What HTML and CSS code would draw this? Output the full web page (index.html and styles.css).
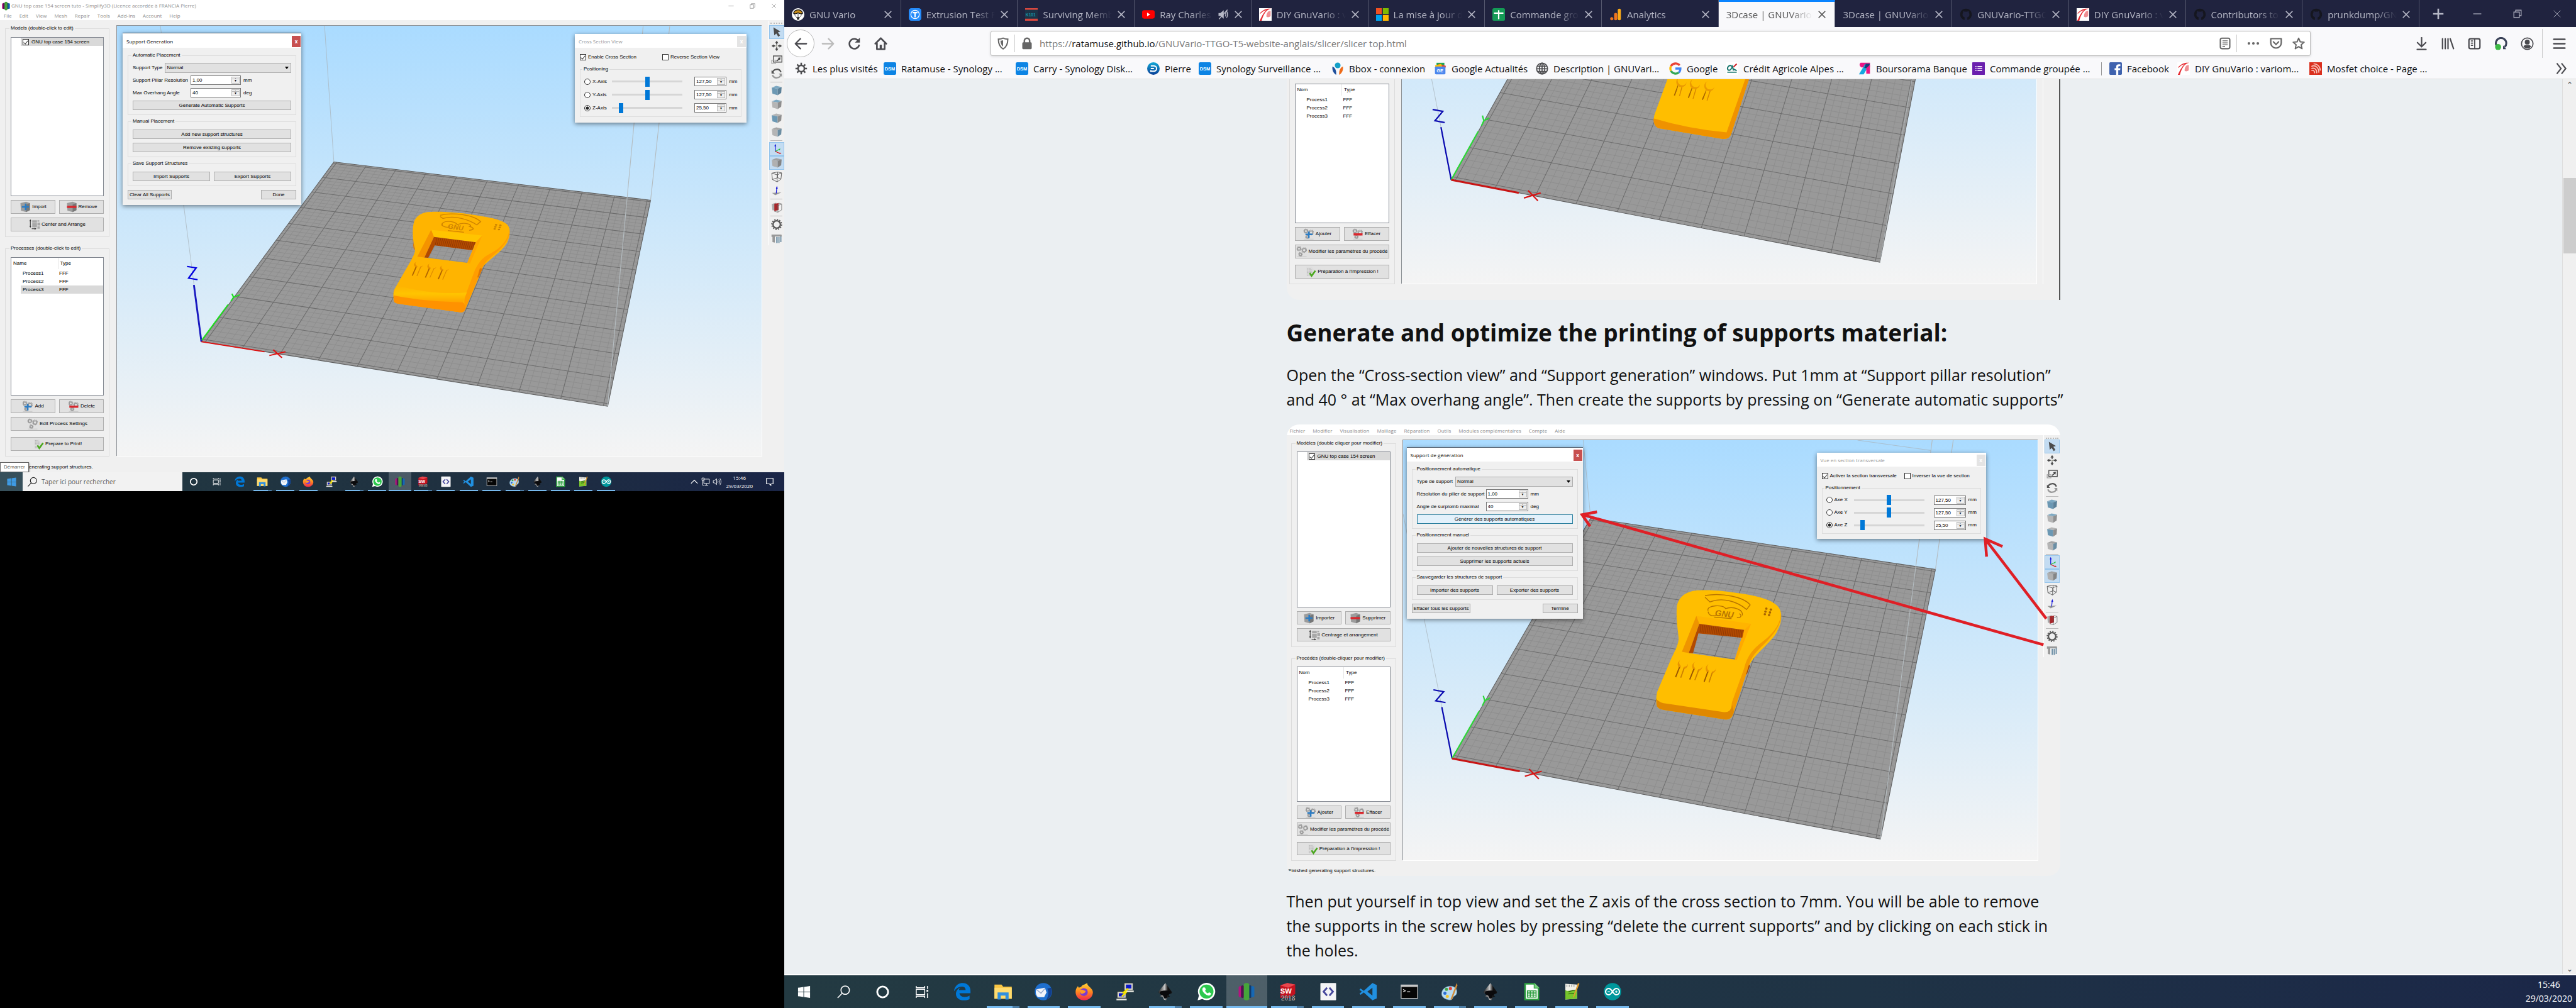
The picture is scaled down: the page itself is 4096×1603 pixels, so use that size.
FILE: index.html
```html
<!DOCTYPE html>
<html lang="fr">
<head>
<meta charset="utf-8">
<title>3Dcase | GNUVario</title>
<link rel="stylesheet" href="styles.css">
</head>
<body>
<svg class="defs" aria-hidden="true">
  <defs>
    <linearGradient id="sky" x1="0" y1="0" x2="0" y2="1"><stop offset="0" stop-color="#aadbff"/><stop offset=".5" stop-color="#cfe8fa"/><stop offset="1" stop-color="#f4f4f4"/></linearGradient>
    <linearGradient id="skyLow" x1="0" y1="0" x2="0" y2="1"><stop offset="0" stop-color="#d2e9fa"/><stop offset="1" stop-color="#f4f4f4"/></linearGradient>
    <linearGradient id="fox" x1="0" y1="0" x2="0" y2="1"><stop offset="0" stop-color="#ffd23a"/><stop offset=".5" stop-color="#ff8a1e"/><stop offset="1" stop-color="#f0264f"/></linearGradient>
    <linearGradient id="band" x1="0" y1="0" x2="0" y2="1"><stop offset="0" stop-color="#ffb400"/><stop offset=".5" stop-color="#ffc400"/><stop offset="1" stop-color="#ffa600"/></linearGradient>
    <linearGradient id="drop" x1="0" y1="0" x2="1" y2="0"><stop offset="0" stop-color="#222"/><stop offset=".45" stop-color="#c8c8c8"/><stop offset=".7" stop-color="#111"/></linearGradient>
    <linearGradient id="blueball" x1="0" y1="0" x2="0" y2="1"><stop offset="0" stop-color="#12a8d6"/><stop offset="1" stop-color="#0b3f97"/></linearGradient>
  </defs>
</svg>
<svg class="icons" aria-hidden="true">
  <symbol id="s3d" viewBox="0 0 24 24"><rect x="2" y="5" width="7" height="14" rx="2" fill="#b5127f"/><rect x="15" y="5" width="7" height="14" rx="2" fill="#1668b4"/><rect x="5" y="4" width="4" height="16" rx="2" fill="#4d1450"/><rect x="15" y="4" width="3" height="16" rx="1" fill="#123a6b"/><rect x="8.500" y="1" width="7" height="22" rx="3" fill="#46a43a"/></symbol>
  <symbol id="win" viewBox="0 0 24 24"><path fill="currentColor" d="M2 5l9-1.300v7.800H2zM12 3.600L22 2v9.500H12zM2 12.500h9v7.800L2 19zM12 12.500h10V22l-10-1.600z"/></symbol>
  <symbol id="search" viewBox="0 0 24 24"><circle cx="14.500" cy="9" r="7" fill="none" stroke="currentColor" stroke-width="1.600"/><path d="M9.500 14L2 22" stroke="currentColor" stroke-width="1.600"/></symbol>
  <symbol id="cortana" viewBox="0 0 24 24"><circle cx="12" cy="12" r="9" fill="none" stroke="#fff" stroke-width="3"/></symbol>
  <symbol id="taskview" viewBox="0 0 24 24"><path d="M2 2v3h14V2M2 22v-3h14v3M2 7.500h14v9H2zM20.500 2v5M20.500 14v8" fill="none" stroke="#fff" stroke-width="1.500"/><path d="M19 8.500h3v3h-3z" fill="#fff"/></symbol>
  <symbol id="edge" viewBox="0 0 24 24"><path fill="#0078d7" d="M1.500 11.500C2.300 5 6.500 1 12.500 1 19 1 22.500 5.500 22.500 11v3H8.500c.2 3 2.800 4.700 6.300 4.700 2.500 0 4.700-.7 6.500-1.800v4.600c-2 1-4.600 1.500-7.300 1.500C7.500 23 4 19.500 4 15c0-3.800 2.200-6.800 5.500-8.200C8 8 7.900 9.500 8 10h8.300c0-2.700-1.500-4.400-4.600-4.400-4 0-7.800 2.200-10.200 5.900z"/></symbol>
  <symbol id="folder" viewBox="0 0 24 24"><path d="M1 3h9l2 2.500h11V21H1z" fill="#f8c543"/><path d="M1 7h22v14H1z" fill="#ffdb6e"/><path d="M5 22v-9h14v9h-4v-5H9v5z" fill="#2f8fdf"/></symbol>
  <symbol id="tbird" viewBox="0 0 24 24"><circle cx="12" cy="12" r="11" fill="#1f6fce"/><path d="M22 7c2 6 0 13-7 16 4-5 4-10 2-15z" fill="#123f8f"/><path d="M3 9l11-2 2 6-3 6-8 0c-3-3-3-7-2-10z" fill="#f2f4fa"/><path d="M3 9l6 5 5-6" fill="none" stroke="#8fa5cc"/></symbol>
  <symbol id="firefox" viewBox="0 0 24 24"><path fill="url(#fox)" d="M12 23C5.500 23 1 18.200 1 12.300 1 9 2.500 6.500 4 5l1 2 3-1c1-2 3-3 4-3l4-2c-.5 2.500 2 4 3.500 5.500C22 9 23 10.500 23 13c0 5.500-5 10-11 10z"/><circle cx="11.500" cy="12.500" r="5" fill="#7a3bd2"/><path d="M6 10c3-2 6 1 8 1-1 3-3 3-5 4-2-1-3-3-3-5z" fill="#ff9c23"/></symbol>
  <symbol id="putty" viewBox="0 0 24 24"><path d="M11 1h11v9H11zM2 12h11v8H2z" fill="#d5d5cc" stroke="#333" stroke-width=".6"/><path d="M13 3h7v5h-7zM4 14h7v4H4z" fill="#0b18c8"/><path d="M12 11.500h11M1 22h13" stroke="#e8e8e0" stroke-width="2"/><path d="M16 8l-6 5h3l-5 5" fill="none" stroke="#f5e400" stroke-width="2"/></symbol>
  <symbol id="ink" viewBox="0 0 24 24"><path d="M12 1l8 11c1 2-1 3-3 3l-1 2 2 1-3 1-2 4-3-1-1-3-4-1 3-3-4-1c-1-1-1-2 0-3z" fill="url(#drop)"/><path d="M5 12c4-2 10-2 14 0-1 3-2 3-4 4l-1 4-3 1-2-4-4-2z" fill="#0a0a0c"/></symbol>
  <symbol id="whatsapp" viewBox="0 0 24 24"><path d="M1 23l1.700-6A11 11 0 1 1 7 21.400z" fill="#fff"/><circle cx="12.300" cy="11.900" r="8.900" fill="#2cc84d"/><path d="M8.500 6.500l2 .3 1 2.600-1 1.400c1 1.800 2 2.700 3.600 3.400l1.400-1.400 2.500 1.200c.3 2-1.500 3.200-3 3-4-.6-8-4.800-8-8 0-1 .6-2.100 1.500-2.500z" fill="#fff"/></symbol>
  <symbol id="sw" viewBox="0 0 24 24"><path d="M3 4l9-3 10 2v12l-8 5H3z" fill="#c4121f"/><path d="M3 4l9-3 10 2-9 4z" fill="#e9474e"/><text x="3" y="14" font-size="9" font-weight="700" fill="#fff">SW</text><text x="4" y="23" font-size="8" font-weight="700" fill="#fff" stroke="#111" stroke-width=".4">2018</text></symbol>
  <symbol id="code" viewBox="0 0 24 24"><rect x="2" y="1" width="20" height="22" rx="1" fill="#f4f4f6"/><path d="M10.500 7L6 12l4.500 5M13.500 7l4.500 5-4.500 5" fill="none" stroke="#45469b" stroke-width="2.200"/></symbol>
  <symbol id="vscode" viewBox="0 0 24 24"><path d="M17 1l5.500 2.500v17L17 23 6 13l-4 3-1.500-1.500L3.500 12 .5 9.500 2 8l4 3zM17 7l-6.500 5 6.500 5z" fill="#2190e0" fill-rule="evenodd"/></symbol>
  <symbol id="cmd" viewBox="0 0 24 24"><path d="M1 3h22v18H1z" fill="#c8c8c8"/><path d="M2 6h20v14H2z" fill="#060606"/><path d="M4 9l3 2-3 1M9 12h4" stroke="#ddd" fill="none"/></symbol>
  <symbol id="paint" viewBox="0 0 24 24"><path d="M13 5c6 0 9 4 8 9-1 4-4 3-5 6-1 3-4 3-7 2-5-1-8-5-7-9 1-5 6-8 11-8z" fill="#b9dcef" stroke="#6b98b4" stroke-width=".6"/><circle cx="8" cy="9" r="2" fill="#43a647"/><circle cx="13" cy="8" r="2" fill="#e23d35"/><circle cx="6" cy="14" r="2" fill="#2c6fd4"/><circle cx="9" cy="18" r="2" fill="#f3c42f"/><path d="M21 1l1 3-7 18-2 0z" fill="#d28a36"/></symbol>
  <symbol id="calc" viewBox="0 0 24 24"><path d="M3 1h13l6 6v16H3z" fill="#2c9e3f"/><path d="M5 3h10v5h5v13H5z" fill="#fff"/><path d="M16 1l6 6h-6z" fill="#7bd07e"/><path d="M7 11h11v8H7zM7 13.700h11M7 16.400h11M10.600 11v8M14.300 11v8" fill="none" stroke="#2c9e3f" stroke-width="1.300"/></symbol>
  <symbol id="npp" viewBox="0 0 24 24"><path d="M4 2l15 1v18l-15 1z" fill="#f2f2ea"/><path d="M4 10c4 3 9-2 15 0v11l-15 1z" fill="#76c62b"/><path d="M6 3v3M9 3v3M12 3v3M15 3v3" stroke="#999"/><path d="M8 12l8-2M8 15l7-1" stroke="#24500f"/><path d="M22 2l-7 17-1 1V18L20 1z" fill="#e09a2c"/></symbol>
  <symbol id="arduino" viewBox="0 0 24 24"><circle cx="12" cy="12" r="11" fill="#00979c"/><path d="M12 12c-2-3-3.200-4-4.800-4a4 4 0 0 0 0 8C8.800 16 10 15 12 12s3.200-4 4.800-4a4 4 0 0 1 0 8C15.200 16 14 15 12 12z" fill="none" stroke="#fff" stroke-width="1.700"/><path d="M5.700 12h3M15.300 12h3M16.800 10.500v3" stroke="#fff"/></symbol>

  <symbol id="t-arrow" viewBox="0 0 24 24"><path d="M5 2l15 9-5.500 1.500L19 19l-3.500 3-4.500-7-4 4z" fill="#4b4b4b"/></symbol>
  <symbol id="t-move" viewBox="0 0 24 24"><path d="M12 1l3.500 5h-2.300v3h-2.400V6H8.500zM12 23l-3.500-5h2.300v-3h2.400v3h2.300zM1 12l5-3.500v2.300h3v2.400H6v2.300zM23 12l-5 3.500v-2.300h-3v-2.400h3V8.500z" fill="#4b4b4b"/><path d="M10.500 10.500h3v3h-3z" fill="#9a9a8c"/></symbol>
  <symbol id="t-scale" viewBox="0 0 24 24"><path d="M5 4h18v13H5z" fill="none" stroke="#555" stroke-width="1.800"/><path d="M1.500 13h8v7h-8z" fill="none" stroke="#999" stroke-width="1.500"/><path d="M11 14l5-4-2-2 6-1-1 6-1.500-1.500-5 4z" fill="#444"/></symbol>
  <symbol id="t-rotate" viewBox="0 0 24 24"><path d="M3 10a9.500 9.500 0 0 1 18-1" fill="none" stroke="#555" stroke-width="3"/><path d="M1 5v7h7z" fill="#555"/><path d="M21 14a9.500 9.500 0 0 1-18 1" fill="none" stroke="#999" stroke-width="3"/><path d="M23 19v-7h-7z" fill="#999"/></symbol>
  <symbol id="t-cube" viewBox="0 0 24 24"><path d="M1.500 5.500L11 2l11.500 2.500L14 8z" style="fill:var(--top)"/><path d="M1.500 5.500L14 8v14L3 18.500z" style="fill:var(--front)"/><path d="M14 8l8.500-3.500L21.500 17 14 22z" style="fill:var(--side)"/></symbol>
  <symbol id="t-axes" viewBox="0 0 24 24"><path d="M9 17V5" stroke="#1212d8" stroke-width="1.600"/><path d="M9 1l2 5H7z" fill="#1212d8"/><path d="M9 17l8-4" stroke="#1fc03a" stroke-width="1.600"/><path d="M20 11l-2 4-2-3z" fill="#1fc03a"/><path d="M9 17l9 4" stroke="#d81212" stroke-width="1.600"/><path d="M22 22l-5 0 1.500-3z" fill="#d81212"/></symbol>
  <symbol id="t-wire" viewBox="0 0 24 24"><path d="M1.500 4.500L14 2l8.500 2L13 8zM1.500 4.500L3 18l10 5V8M22.500 4L21 17l-8 6M3 18l11-4 7 3M14 2v12" fill="none" stroke="#555" stroke-width="1.200"/></symbol>
  <symbol id="t-normal" viewBox="0 0 24 24"><path d="M2 17l20-1-13 6z" fill="#999"/><path d="M11 18l1.200-12" stroke="#1212d8" stroke-width="1.600"/><path d="M12.500 2l1.800 6h-4z" fill="#1212d8"/></symbol>
  <symbol id="t-cross" viewBox="0 0 24 24"><path d="M1.500 4.500L11 1.500v16L3 18z" fill="#aaa"/><path d="M7 4l9-1.500V17l-9 3z" fill="#a8262a"/><path d="M16 2.500l6.500 2-8 3.500v14l8-5V4.500M14.500 8L12 7M14.500 22L7 20" fill="none" stroke="#666" stroke-width="1"/></symbol>
  <symbol id="t-gear" viewBox="0 0 24 24"><circle cx="12" cy="12" r="7.800" fill="none" stroke="#555" stroke-width="3"/><circle cx="12" cy="12" r="10.400" fill="none" stroke="#555" stroke-width="2.400" stroke-dasharray="2.700 2.745"/></symbol>
  <symbol id="t-support" viewBox="0 0 24 24"><path d="M1 4h21l1 4H8v13l-5-1V9H1z" fill="#999"/><path d="M11 9h3v13h-3zM15.500 9h2.500v13h-2.500zM19.500 8h2.500v12h-2.500z" fill="#6f90a5"/></symbol>

  <symbol id="b-import" viewBox="0 0 24 24"><path d="M2 4l12-3 8 3v15l-8 4L3 20z" fill="#9c9c9c"/><path d="M14 7l8-3v15l-8 4z" fill="#777"/><path d="M13 5v14M5 12h15" stroke="#2b7cc4" stroke-width="3.500"/></symbol>
  <symbol id="b-remove" viewBox="0 0 24 24"><path d="M2 4l12-3 8 3v15l-8 4L3 20z" fill="#9c9c9c"/><path d="M14 7l8-3v15l-8 4z" fill="#777"/><path d="M2 12h20" stroke="#d9262d" stroke-width="4.500"/></symbol>
  <symbol id="b-arrange" viewBox="0 0 24 24"><path d="M7 3h10v5H7zM7 9h10v9H7zM18 3h4v3h-4zM18 8h6v6h-6zM18 16h5v5h-5z" fill="#a8a8a8"/><path d="M3 3v14M6 21h8" stroke="#333" stroke-width="1.400"/><path d="M3 1l2 4H1zM3 19l2-4H1zM16 21l-4 2v-4z" fill="#333"/></symbol>
  <symbol id="gears" viewBox="0 0 24 24"><g fill="none" stroke="#999"><circle cx="6" cy="6" r="3" stroke-width="2"/><circle cx="6" cy="6" r="4.500" stroke-dasharray="1.700 1.100" stroke-width="1.500"/><circle cx="17" cy="9" r="3.500" stroke-width="2"/><circle cx="17" cy="9" r="5.200" stroke-dasharray="1.900 1.300" stroke-width="1.500"/><circle cx="9" cy="18" r="2.500" stroke-width="2"/><circle cx="9" cy="18" r="4" stroke-dasharray="1.600 1" stroke-width="1.400"/></g><path d="M2 23h20" stroke="#bbb"/></symbol>
  <symbol id="b-add" viewBox="0 0 24 24"><use href="#gears"/><path d="M12 7v14M5 13h15" stroke="#2b7cc4" stroke-width="3.500"/></symbol>
  <symbol id="b-del" viewBox="0 0 24 24"><use href="#gears"/><path d="M3 13h19" stroke="#d9262d" stroke-width="4.500"/></symbol>
  <symbol id="b-print" viewBox="0 0 24 24"><path d="M3 2h11l5 5v14H3z" fill="#ddd"/><path d="M5 5h7M5 8h10M5 11h10M5 14h10M5 17h10M5 20h10" stroke="#999" stroke-dasharray="2 1"/><path d="M10 15l4 6 8-11" fill="none" stroke="#4aa81e" stroke-width="3.500"/></symbol>

  <symbol id="f-vario" viewBox="0 0 24 24"><circle cx="12" cy="12" r="12" fill="#fff"/><path d="M3.500 10a8.500 7 0 0 1 17 0l-3.500 1-5-2-5 2z" fill="#c98f1d" stroke="#111" stroke-width="1.500"/><path d="M4 11l7 9M20 11l-7 9M12 9v9" stroke="#333"/><path d="M10 17h4v5h-4z" fill="#222"/></symbol>
  <symbol id="f-thing" viewBox="0 0 24 24"><rect width="24" height="24" rx="5" fill="#248bfb"/><circle cx="12" cy="12" r="8" fill="none" stroke="#fff" stroke-width="1.500"/><path d="M7.500 8.500h9M12 9v8.500" stroke="#fff" stroke-width="2.500"/></symbol>
  <symbol id="f-kase" viewBox="0 0 24 24"><path d="M0 0h24v24H0z" fill="#1c3347"/><path d="M0 0h24v3H0zM0 20h24v4H0z" fill="#d9483f"/><text x="1" y="15" font-size="8" font-weight="700" fill="#1794a5">K101</text></symbol>
  <symbol id="f-yt" viewBox="0 0 24 24"><rect y="4" width="24" height="16" rx="4" fill="#f00"/><path d="M9.500 8.500v7l6-3.500z" fill="#fff"/></symbol>
  <symbol id="f-diy" viewBox="0 0 24 24"><path d="M0 0h24v24H0z" fill="#fff"/><path d="M2 9C8 3 14 0 23 1 14 3 9 10 5 24H1C6 14 9 8 14 4 9 5 6 7 2 11z" fill="#e62c33"/><path d="M14 16C14 9 17 5 22 5v10c-3 3-7 3-8 1z" fill="#ef8f93"/></symbol>
  <symbol id="f-ms" viewBox="0 0 24 24"><path d="M0 0h11v11H0z" fill="#f25022"/><path d="M13 0h11v11H13z" fill="#7fba00"/><path d="M0 13h11v11H0z" fill="#00a4ef"/><path d="M13 13h11v11H13z" fill="#ffb900"/></symbol>
  <symbol id="f-sheet" viewBox="0 0 24 24"><rect width="24" height="24" rx="3" fill="#149a56"/><path d="M3 9.500h18M12 4v17" stroke="#fff" stroke-width="2.600"/></symbol>
  <symbol id="f-ana" viewBox="0 0 24 24"><rect x="16" y="1" width="6" height="22" rx="3" fill="#fbab18"/><rect x="9" y="9" width="6" height="14" rx="3" fill="#ec7420"/><circle cx="4.500" cy="20" r="3" fill="#ec7420"/></symbol>
  <symbol id="f-gh" viewBox="0 0 24 24"><path fill="#15161f" d="M12 1C5.500 1 1 6 1 12c0 5 3.200 9.200 7.600 10.600.6.100.8-.2.800-.6v-4.500c-3-1-4-3-4-5.500 0-1.300.4-2.500 1.200-3.300-.3-1-.2-2.200.2-3 1.200 0 2.300.7 3 1.200 1.400-.4 3-.4 4.400 0 .8-.6 1.800-1.200 3-1.200.5.900.5 2 .2 3 .8.900 1.200 2 1.200 3.300 0 3-1.300 4.800-4 5.500V22c0 .4.200.7.800.6C19.800 21.200 23 17 23 12 23 6 18.500 1 12 1z"/></symbol>
  <symbol id="k-gear" viewBox="0 0 24 24"><circle cx="12" cy="12" r="6" fill="none" stroke="#4d4d50" stroke-width="3"/><path d="M12 1v4M12 19v4M1 12h4M19 12h4M4.200 4.200L7 7M17 17l2.800 2.800M4.200 19.800L7 17M17 7l2.800-2.800" stroke="#4d4d50" stroke-width="3"/></symbol>
  <symbol id="k-dsm" viewBox="0 0 24 24"><rect width="24" height="24" rx="3" fill="#0d84e4"/><text x="12" y="15.500" font-size="9" text-anchor="middle" font-weight="700" fill="#fff">DSM</text></symbol>
  <symbol id="k-pierre" viewBox="0 0 24 24"><circle cx="12" cy="12" r="12" fill="url(#blueball)"/><path d="M7 7h6a5 5 0 0 1 0 10H7v-2M7 12h6" fill="none" stroke="#fff" stroke-width="2.400"/></symbol>
  <symbol id="k-bbox" viewBox="0 0 24 24"><circle cx="12" cy="6" r="5.500" fill="#14a0c8"/><path d="M2 8c5 2 8 8 7 16C4 21 1 15 2 8z" fill="#1f4f9c"/><path d="M22 8c-5 2-8 8-7 16 5-3 8-9 7-16z" fill="#ee6b19"/></symbol>
  <symbol id="k-news" viewBox="0 0 24 24"><path d="M5 1h15v9H5z" fill="#23a455"/><path d="M9 3l14 4-3 9H6z" fill="#e94335"/><path d="M2 6l12-3 3 10H4z" fill="#fbbc05"/><rect x="2" y="8" width="20" height="15" rx="2" fill="#4c86ee"/><text x="5" y="19" font-size="9" font-weight="700" fill="#fff">GE</text></symbol>
  <symbol id="k-globe" viewBox="0 0 24 24"><g fill="none" stroke="#4d4d50" stroke-width="2"><circle cx="12" cy="12" r="10.500"/><ellipse cx="12" cy="12" rx="5" ry="10.500"/><path d="M12 1.500v21M2.500 7.500h19M1.500 12.500h21M3 17.500h18"/></g></symbol>
  <symbol id="k-google" viewBox="0 0 24 24"><path d="M20 6A10 10 0 0 0 3.500 7.500" fill="none" stroke="#ea4335" stroke-width="4"/><path d="M3.500 7.500a10 10 0 0 0 0 9" fill="none" stroke="#fbbc05" stroke-width="4"/><path d="M3.500 16.500A10 10 0 0 0 18.500 19.500" fill="none" stroke="#34a853" stroke-width="4"/><path d="M18.500 19.500C20.500 18 21.500 15 21.500 12H12" fill="none" stroke="#4285f4" stroke-width="4"/></symbol>
  <symbol id="k-ca" viewBox="0 0 24 24"><path d="M0 0h24v24H0z" fill="#fff"/><path d="M12 8C7 3 2 10 4 14c2 3 6 1 9-6l2 8M13 12l8 4" fill="none" stroke="#19766f" stroke-width="2.400"/><path d="M15 9l6-6" stroke="#d22b33" stroke-width="2.500"/><path d="M3 19h18" stroke="#19766f" stroke-width="2"/></symbol>
  <symbol id="k-bourso" viewBox="0 0 24 24"><path d="M4 1h18v9H6C2 8 1 4 4 1z" fill="#ec1585"/><path d="M13 3l9 0L10 23H1z" fill="#17a7e0"/><path d="M14 3h8l-3 8h-8z" fill="#183a78"/><path d="M15 11l7-6v17h-7z" fill="#ec1585"/></symbol>
  <symbol id="k-forms" viewBox="0 0 24 24"><rect width="24" height="24" rx="1" fill="#6a1fae"/><path d="M6 8h2M10 8h9M6 12h2M10 12h9M6 16h2M10 16h9" stroke="#fff" stroke-width="1.800"/></symbol>
  <symbol id="k-fb" viewBox="0 0 24 24"><rect width="24" height="24" rx="2" fill="#3f62ae"/><path d="M13 24v-9h-3v-3.500h3V9c0-3.500 2-5 5-5h3v3.500h-2c-1.600 0-2 .6-2 2v2h4L20.500 15H17v9z" fill="#fff"/></symbol>
  <symbol id="k-esp" viewBox="0 0 24 24"><path d="M0 0h24v24H0z" fill="#da2f1d"/><g fill="none" stroke="#f9c8c0" stroke-width="2"><path d="M4 8c8-4 15 4 14 12M4 12c6-3 11 3 10 9M4 16c3-2 7 1 6 5M8 3c8 0 13 6 13 13"/></g></symbol>

  <symbol id="n-back" viewBox="0 0 24 24"><path d="M22 12H3M11 3l-9 9 9 9" fill="none" stroke="currentColor" stroke-width="2.600" stroke-linecap="round" stroke-linejoin="round"/></symbol>
  <symbol id="n-reload" viewBox="0 0 24 24"><path d="M19 6.500A9 9 0 1 0 20.500 15" fill="none" stroke="currentColor" stroke-width="3" stroke-linecap="round"/><path d="M22 1v9h-9z" fill="currentColor"/></symbol>
  <symbol id="n-home" viewBox="0 0 24 24"><path d="M2 12L12 2l10 10M5 11v11h14V11" fill="none" stroke="currentColor" stroke-width="3" stroke-linejoin="round" stroke-linecap="round"/><path d="M10 14h4v8h-4z" fill="currentColor"/></symbol>
  <symbol id="n-shield" viewBox="0 0 24 24"><path d="M12 2c3 1.500 6 2 9 2 0 9-2 15-9 18.500C5 19 3 13 3 4c3 0 6-.5 9-2z" fill="none" stroke="#666" stroke-width="2.400"/><path d="M12 6v12c-3.500-2.500-4.800-6-5-11 2 0 3.500-.4 5-1z" fill="#666"/></symbol>
  <symbol id="n-lock" viewBox="0 0 24 24"><rect x="3" y="10" width="18" height="13" rx="2" fill="#666"/><path d="M7 11V7a5 5 0 0 1 10 0v4" fill="none" stroke="#666" stroke-width="3"/></symbol>
  <symbol id="n-reader" viewBox="0 0 24 24"><rect x="3" y="2" width="18" height="20" rx="3" fill="none" stroke="#666" stroke-width="2.500"/><path d="M7 7h10M7 11h10M7 14.500h10M7 18h5" stroke="#666" stroke-width="1.700"/></symbol>
  <symbol id="n-dots" viewBox="0 0 24 24"><g fill="#666"><circle cx="3.500" cy="12" r="2.500"/><circle cx="12" cy="12" r="2.500"/><circle cx="20.500" cy="12" r="2.500"/></g></symbol>
  <symbol id="n-pocket" viewBox="0 0 24 24"><path d="M2 3h20v8a10 10 0 0 1-20 0z" fill="none" stroke="#666" stroke-width="2.600" stroke-linejoin="round"/><path d="M7 9l5 5 5-5" fill="none" stroke="#666" stroke-width="2.600" stroke-linecap="round"/></symbol>
  <symbol id="n-star" viewBox="0 0 24 24"><path d="M12 2l3 7 7.500.7-5.700 5 1.700 7.500L12 18.200l-6.500 4 1.700-7.500-5.700-5L9 9z" fill="none" stroke="#666" stroke-width="2.300" stroke-linejoin="round"/></symbol>
  <symbol id="n-down" viewBox="0 0 24 24"><path d="M12 1v16M4.500 10l7.500 7.500 7.500-7.500M4 22.500h16" fill="none" stroke="currentColor" stroke-width="2.500" stroke-linecap="round"/></symbol>
  <symbol id="n-lib" viewBox="0 0 24 24"><path d="M2 3v18M7 3v18M12 3v18M16 3l6 18" fill="none" stroke="currentColor" stroke-width="2.500" stroke-linecap="round"/></symbol>
  <symbol id="n-side" viewBox="0 0 24 24"><rect x="2" y="3" width="20" height="18" rx="3" fill="none" stroke="currentColor" stroke-width="2.500"/><path d="M12.500 3v18M5.500 7h4M5.500 11h4M5.500 15h4" stroke="currentColor" stroke-width="2"/></symbol>
  <symbol id="n-q" viewBox="0 0 24 24"><path d="M9 20A9.500 9.500 0 1 1 19 18" fill="none" stroke="#3a4258" stroke-width="3.500"/><path d="M16 15l6 7h-6z" fill="#3a4258"/><circle cx="7" cy="18" r="5.500" fill="#3dba45"/></symbol>
  <symbol id="n-user" viewBox="0 0 24 24"><circle cx="12" cy="12" r="10.500" fill="none" stroke="currentColor" stroke-width="2"/><circle cx="12" cy="9" r="4.500" fill="currentColor"/><path d="M5 17c2-3 4-2.500 7-2.500s5-.5 7 2.500c-3 4.500-11 4.500-14 0z" fill="currentColor"/></symbol>
  <symbol id="n-menu" viewBox="0 0 24 24"><path d="M2 4h20M2 12h20M2 20h20" stroke="currentColor" stroke-width="3" stroke-linecap="round"/></symbol>
  <symbol id="n-more" viewBox="0 0 24 24"><path d="M3 2l8 10-8 10M12 2l8 10-8 10" fill="none" stroke="currentColor" stroke-width="2.600"/></symbol>
  <symbol id="x" viewBox="0 0 24 24"><path d="M3 3l18 18M21 3L3 21" stroke="currentColor" stroke-width="var(--sw,3)" fill="none"/></symbol>
  <symbol id="min" viewBox="0 0 24 24"><path d="M1 12h22" stroke="currentColor" stroke-width="2"/></symbol>
  <symbol id="restore" viewBox="0 0 24 24"><path d="M2 7h15v15H2zM7 7V2h15v15h-5" fill="none" stroke="currentColor" stroke-width="2"/></symbol>
  <symbol id="plus" viewBox="0 0 24 24"><path d="M12 1v22M1 12h22" stroke="currentColor" stroke-width="3.500"/></symbol>
  <symbol id="mute" viewBox="0 0 24 24"><path d="M2 9h4l7-6v18l-7-6H2z" fill="currentColor"/><path d="M16 8c2 2 2 6 0 8M19 5c3 4 3 10 0 14M3 22L21 2" fill="none" stroke="currentColor" stroke-width="2"/></symbol>
  <symbol id="up" viewBox="0 0 24 24"><path d="M3 17l9-9 9 9" fill="none" stroke="currentColor" stroke-width="2"/></symbol>
  <symbol id="net" viewBox="0 0 24 24"><path d="M7 5h15v12H7zM14 17v5M9 22h10M2 2h6v6H2zM4 8v14h3" fill="none" stroke="#fff" stroke-width="1.600"/></symbol>
  <symbol id="vol" viewBox="0 0 24 24"><path d="M2 9h3l6-5v16l-6-5H2zM14 9c1.500 2 1.500 4 0 6M17 6c3 4 3 8 0 12M20 3c4 5 4 13 0 18" fill="none" stroke="#fff" stroke-width="1.500"/></symbol>
  <symbol id="note" viewBox="0 0 24 24"><path d="M3 3h18v15h-6v4l-4-4H3z" fill="none" stroke="#fff" stroke-width="2"/></symbol>

  <symbol id="axes" viewBox="3003 168 1362 439" overflow="visible">
    <path d="M3109 384L3087 271" stroke="#0a0ab0" stroke-width="3"/><path d="M3069 233l22 4-17 20 21 4" fill="none" stroke="#0a0ab0" stroke-width="3"/>
    <path d="M3109 384L3167 280M3176 246l3 11M3190 251l-11 6-5 11" fill="none" stroke="#2bd836" stroke-width="3"/>
    <path d="M3109 384L3254 412" stroke="#c81414" stroke-width="4"/><path d="M3265 423l36-11M3274 407l21 22" stroke="#d81414" stroke-width="3"/>
  </symbol>
</svg>

<section class="desktop" aria-label="Simplify3D">
  <div class="app">
    <header class="titlebar"><svg class="i12"><use href="#s3d"/></svg><span class="grow">GNU top case 154 screen tuto - Simplify3D (Licence accordée à FRANCIA Pierre)</span>
      <button class="wc" aria-label="Minimize"><svg class="i8"><use href="#min"/></svg></button><button class="wc" aria-label="Restore"><svg class="i8"><use href="#restore"/></svg></button><button class="wc" aria-label="Close"><svg class="i8"><use href="#x"/></svg></button>
    </header>
    <nav class="menubar"><a href="#">File</a><a href="#">Edit</a><a href="#">View</a><a href="#">Mesh</a><a href="#">Repair</a><a href="#">Tools</a><a href="#">Add-Ins</a><a href="#">Account</a><a href="#">Help</a></nav>
    <div class="work">
      <aside class="side">
        <fieldset class="group"><legend>Models (double-click to edit)</legend>
          <div class="list models"><label class="model"><input type="checkbox" class="check" checked>GNU top case 154 screen</label></div>
          <div class="pair"><button class="btn"><svg class="i18"><use href="#b-import"/></svg>Import</button><button class="btn"><svg class="i18"><use href="#b-remove"/></svg>Remove</button></div>
          <button class="btn"><svg class="i18"><use href="#b-arrange"/></svg>Center and Arrange</button>
        </fieldset>
        <fieldset class="group"><legend>Processes (double-click to edit)</legend>
          <div class="list processes"><table><thead><tr><th>Name</th><th>Type</th></tr></thead><tbody><tr><td>Process1</td><td>FFF</td></tr><tr><td>Process2</td><td>FFF</td></tr><tr class="sel"><td>Process3</td><td>FFF</td></tr></tbody></table></div>
          <div class="pair"><button class="btn"><svg class="i18"><use href="#b-add"/></svg>Add</button><button class="btn"><svg class="i18"><use href="#b-del"/></svg>Delete</button></div>
          <button class="btn"><svg class="i18"><use href="#gears"/></svg>Edit Process Settings</button>
          <button class="btn print"><svg class="i18"><use href="#b-print"/></svg>Prepare to Print!</button>
        </fieldset>
      </aside>
      <div class="view">
        <svg class="scene" viewBox="251 55 1382 922">
          <rect x="251" y="55" width="1382" height="922" fill="url(#sky)"/>
          <path d="M344 55L432 732M716 347L696 55" stroke="#aab4bb" fill="none"/>
          <g data-plate="432 732 1303 871 1395 429 716 347"></g>
          <path d="M1379 56L1303 871M1436 56L1395 429" stroke="#b4bcc0" stroke-width="1.500" fill="none"/>
          <g transform="translate(0 510) scale(.4337 .3508)" fill="none">
            <path d="M996 634L959 287" stroke="#1818c0" stroke-width="9"/><path d="M925 174l45 9-37 62 44 10" stroke="#0000e0" stroke-width="8"/>
            <path d="M998 625L1128 407M1147 341l8 21M1186 347l-31 15-13 25" stroke="#1fe01f" stroke-width="7"/>
            <path d="M996 634L1308 695M1332 718l80-23M1351 683l43 49" stroke="#e01010" stroke-width="7"/>
          </g>
          <g transform="translate(700 340) scale(.5102 .3444)">
            <path fill-rule="evenodd" fill="#ffb400" d="M440 331C400 330 372 360 367 400 360 450 362 500 372 560 374 580 368 600 355 635L285 815C280 835 281 860 283 885Q285 900 310 905L560 956Q578 960 584 935L640 740 655 680C670 640 740 580 760 520 772 480 772 450 768 430 760 390 710 370 640 355 580 338 500 328 440 331ZM452 487L412 615 592 648 628 520Z"/>
            <path fill="#ff9d00" d="M769 440C773 500 745 550 690 615 665 645 658 670 650 700L584 935Q576 900 582 860L625 690C640 650 650 620 690 590 740 550 765 500 769 440Z"/>
            <path fill="#e07800" d="M364 480Q362 520 372 562L368 570Q362 530 364 480ZM645 682L634 738 640 740 656 685Z"/>
            <path fill="url(#band)" d="M300 790C400 830 500 845 590 832L575 890C480 900 380 880 283 850Q284 815 300 790Z"/>
            <path fill="#ff9200" d="M283 852C380 880 480 892 572 893Q583 900 584 935 578 960 560 956L310 905Q285 900 283 885Z"/>
            <path fill="#ffc400" d="M440 443L655 478 628 520 452 487Z"/><path fill="#f59300" d="M440 443L452 487 412 615 382 610Z"/><path fill="#ffa600" d="M655 478L628 520 592 648 603 653Z"/>
            <path fill="#b24a00" d="M452 487L628 520 612 570 455 540 428 617 412 615Z"/>
            <path d="M460 515L622 545" stroke="#7a2c00" stroke-width="48" stroke-dasharray="2 6" opacity=".7"/>
            <g fill="#e89000"><circle cx="387" cy="660" r="19"/><circle cx="443" cy="671" r="19"/><circle cx="496" cy="682" r="19"/></g>
            <path d="M361 728L377 674M416 740L432 684M470 750L486 696" stroke="#b06400" stroke-width="5"/>
            <path d="M380 730L396 672M434 740L451 684M488 752L504 696" stroke="#e08c00" stroke-width="5"/>
            <path d="M372 730L390 665M427 740L446 676M480 752L499 688" stroke="#ffb400" stroke-width="12"/>
            <g fill="#ffb400"><circle cx="392" cy="653" r="18"/><circle cx="448" cy="664" r="18"/><circle cx="501" cy="675" r="18"/></g>
            <path d="M478 352C530 332 620 350 648 392L632 412C600 380 540 350 490 372L478 360M486 416C480 380 540 385 550 410 580 395 610 405 605 425M484 410C490 425 505 430 520 424M598 420C620 430 625 440 600 446M510 447L578 458" fill="none" stroke="#d08400" stroke-width="5"/>
            <g fill="#c98200"><circle cx="713" cy="412" r="5"/><circle cx="731" cy="415" r="5"/><circle cx="710" cy="424" r="5"/><circle cx="728" cy="428" r="5"/><circle cx="707" cy="437" r="5"/><circle cx="725" cy="441" r="5"/></g>
          </g>
          <text x="960" y="490" font-size="15" font-weight="700" font-style="italic" fill="#d08400" transform="rotate(7 960 490)">GNU</text>
        </svg>
        <section class="dialog support">
          <h2>Support Generation<button class="close" aria-label="Close">x</button></h2>
          <fieldset class="group"><legend>Automatic Placement</legend>
            <div class="row"><label for="type">Support Type</label><span class="combo"><select id="type"><option>Normal</option></select></span></div>
            <div class="row"><label class="wide" for="res">Support Pillar Resolution</label><span class="spin"><input id="res" value="1,00"></span>mm</div>
            <div class="row"><label class="wide" for="ang">Max Overhang Angle</label><span class="spin"><input id="ang" value="40"></span>deg</div>
            <button class="btn">Generate Automatic Supports</button>
          </fieldset>
          <fieldset class="group"><legend>Manual Placement</legend><button class="btn">Add new support structures</button><button class="btn">Remove existing supports</button></fieldset>
          <fieldset class="group"><legend>Save Support Structures</legend><div class="pair"><button class="btn">Import Supports</button><button class="btn">Export Supports</button></div></fieldset>
          <div class="foot"><button class="btn">Clear All Supports</button><button class="btn done">Done</button></div>
        </section>
        <section class="dialog section">
          <h2>Cross Section View<button class="close" aria-label="Close">x</button></h2>
          <div class="checks"><label><input type="checkbox" class="check" checked>Enable Cross Section</label><label><input type="checkbox" class="check">Reverse Section View</label></div>
          <fieldset class="group"><legend>Positioning</legend>
            <div class="axis"><label><input type="radio" name="ax">X-Axis</label><input type="range" value="50" aria-label="X"><span class="spin"><input value="127,50" aria-label="X mm"></span>mm</div>
            <div class="axis"><label><input type="radio" name="ax">Y-Axis</label><input type="range" value="50" aria-label="Y"><span class="spin"><input value="127,50" aria-label="Y mm"></span>mm</div>
            <div class="axis"><label><input type="radio" name="ax" checked>Z-Axis</label><input type="range" value="10" aria-label="Z"><span class="spin"><input value="25,50" aria-label="Z mm"></span>mm</div>
          </fieldset>
        </section>
      </div>
      <div class="tools" role="toolbar">
        <i class="grip"></i>
        <button class="on" aria-label="Select"><svg><use href="#t-arrow"/></svg></button><button aria-label="Move"><svg><use href="#t-move"/></svg></button><button aria-label="Scale"><svg><use href="#t-scale"/></svg></button><button aria-label="Rotate"><svg><use href="#t-rotate"/></svg></button><hr>
        <button aria-label="Default view"><svg class="c-all"><use href="#t-cube"/></svg></button><button aria-label="Top view"><svg class="c-top"><use href="#t-cube"/></svg></button><button aria-label="Front view"><svg class="c-front"><use href="#t-cube"/></svg></button><button aria-label="Side view"><svg class="c-side"><use href="#t-cube"/></svg></button><hr>
        <button class="on" aria-label="Axes"><svg><use href="#t-axes"/></svg></button><button class="on" aria-label="Solid"><svg class="c-none"><use href="#t-cube"/></svg></button><button aria-label="Wireframe"><svg><use href="#t-wire"/></svg></button><button aria-label="Normals"><svg><use href="#t-normal"/></svg></button><hr>
        <button aria-label="Cross section"><svg><use href="#t-cross"/></svg></button><hr>
        <button aria-label="Settings"><svg><use href="#t-gear"/></svg></button><button aria-label="Supports"><svg><use href="#t-support"/></svg></button>
      </div>
    </div>
    <div class="status"><span class="tip">Démarrer</span>enerating support structures.</div>
  </div>
  <div class="taskbar small">
    <button class="start" aria-label="Démarrer"><svg><use href="#win"/></svg></button>
    <label class="find"><svg><use href="#search"/></svg><input placeholder="Taper ici pour rechercher" aria-label="Rechercher"></label>
    <div class="tasks">
      <button aria-label="Cortana"><svg><use href="#cortana"/></svg></button><button aria-label="Task view"><svg><use href="#taskview"/></svg></button><button aria-label="Edge"><svg><use href="#edge"/></svg></button><button class="run multi" aria-label="Explorer"><svg><use href="#folder"/></svg></button><button class="run" aria-label="Thunderbird"><svg><use href="#tbird"/></svg></button><button class="run" aria-label="Firefox"><svg><use href="#firefox"/></svg></button><button aria-label="PuTTY"><svg><use href="#putty"/></svg></button><button class="run multi" aria-label="Inkscape"><svg><use href="#ink"/></svg></button><button class="run" aria-label="WhatsApp"><svg><use href="#whatsapp"/></svg></button><button class="run active" aria-label="Simplify3D"><svg><use href="#s3d"/></svg></button><button class="run multi" aria-label="SolidWorks"><svg><use href="#sw"/></svg></button><button class="run" aria-label="Editor"><svg><use href="#code"/></svg></button><button class="run" aria-label="VS Code"><svg><use href="#vscode"/></svg></button><button class="run" aria-label="Terminal"><svg><use href="#cmd"/></svg></button><button class="run multi" aria-label="Paint"><svg><use href="#paint"/></svg></button><button class="run" aria-label="Inkscape 2"><svg><use href="#ink"/></svg></button><button class="run" aria-label="Calc"><svg><use href="#calc"/></svg></button><button class="run" aria-label="Notepad++"><svg><use href="#npp"/></svg></button><button class="run" aria-label="Arduino"><svg><use href="#arduino"/></svg></button>
    </div>
    <div class="tray"><svg><use href="#up"/></svg><svg><use href="#net"/></svg><svg><use href="#vol"/></svg><time>15:46<br>29/03/2020</time><svg class="bell"><use href="#note"/></svg></div>
  </div>
</section>

<section class="browser" aria-label="Firefox">
  <div class="tabbar">
    <div class="tabs">
      <div class="tab"><svg><use href="#f-vario"/></svg><span>GNU Vario</span><button aria-label="Close tab"><svg><use href="#x"/></svg></button></div>
      <div class="tab"><svg><use href="#f-thing"/></svg><span>Extrusion Test Fi</span><button aria-label="Close tab"><svg><use href="#x"/></svg></button></div>
      <div class="tab"><svg><use href="#f-kase"/></svg><span>Surviving Memb</span><button aria-label="Close tab"><svg><use href="#x"/></svg></button></div>
      <div class="tab"><svg><use href="#f-yt"/></svg><span>Ray Charles</span><svg class="mute"><use href="#mute"/></svg><button aria-label="Close tab"><svg><use href="#x"/></svg></button></div>
      <div class="tab"><svg><use href="#f-diy"/></svg><span>DIY GnuVario : v</span><button aria-label="Close tab"><svg><use href="#x"/></svg></button></div>
      <div class="tab"><svg><use href="#f-ms"/></svg><span>La mise à jour d</span><button aria-label="Close tab"><svg><use href="#x"/></svg></button></div>
      <div class="tab"><svg><use href="#f-sheet"/></svg><span>Commande gro</span><button aria-label="Close tab"><svg><use href="#x"/></svg></button></div>
      <div class="tab"><svg><use href="#f-ana"/></svg><span>Analytics</span><button aria-label="Close tab"><svg><use href="#x"/></svg></button></div>
      <div class="tab current"><span>3Dcase | GNUVario-</span><button aria-label="Close tab"><svg><use href="#x"/></svg></button></div>
      <div class="tab"><span>3Dcase | GNUVario-</span><button aria-label="Close tab"><svg><use href="#x"/></svg></button></div>
      <div class="tab"><svg><use href="#f-gh"/></svg><span>GNUVario-TTGO</span><button aria-label="Close tab"><svg><use href="#x"/></svg></button></div>
      <div class="tab"><svg><use href="#f-diy"/></svg><span>DIY GnuVario : v</span><button aria-label="Close tab"><svg><use href="#x"/></svg></button></div>
      <div class="tab"><svg><use href="#f-gh"/></svg><span>Contributors to</span><button aria-label="Close tab"><svg><use href="#x"/></svg></button></div>
      <div class="tab"><svg><use href="#f-gh"/></svg><span>prunkdump/GN</span><button aria-label="Close tab"><svg><use href="#x"/></svg></button></div>
    </div>
    <div class="winctl"><button class="new" aria-label="New tab"><svg><use href="#plus"/></svg></button><button aria-label="Minimize"><svg><use href="#min"/></svg></button><button aria-label="Restore"><svg><use href="#restore"/></svg></button><button aria-label="Close"><svg><use href="#x"/></svg></button></div>
  </div>
  <div class="navbar">
    <button class="back" aria-label="Back"><svg><use href="#n-back"/></svg></button><button class="fwd" aria-label="Forward"><svg><use href="#n-back"/></svg></button><button aria-label="Reload"><svg><use href="#n-reload"/></svg></button><button aria-label="Home"><svg><use href="#n-home"/></svg></button>
    <div class="url"><svg><use href="#n-shield"/></svg><i class="bar"></i><svg><use href="#n-lock"/></svg><span class="addr">https://<b>ratamuse.github.io</b>/GNUVario-TTGO-T5-website-anglais/slicer/slicer top.html</span><svg><use href="#n-reader"/></svg><i class="bar"></i><svg><use href="#n-dots"/></svg><svg><use href="#n-pocket"/></svg><svg><use href="#n-star"/></svg></div>
    <div class="right"><button aria-label="Downloads"><svg><use href="#n-down"/></svg></button><button aria-label="Library"><svg><use href="#n-lib"/></svg></button><button aria-label="Sidebar"><svg><use href="#n-side"/></svg></button><button aria-label="Qwant"><svg><use href="#n-q"/></svg></button><button aria-label="Account"><svg><use href="#n-user"/></svg></button><i class="bar"></i><button class="menu" aria-label="Menu"><svg><use href="#n-menu"/></svg></button></div>
  </div>
  <nav class="bookmarks">
    <a href="#"><svg><use href="#k-gear"/></svg>Les plus visités</a><a href="#"><svg><use href="#k-dsm"/></svg>Ratamuse - Synology ...</a><a href="#"><svg><use href="#k-dsm"/></svg>Carry - Synology Disk...</a><a href="#"><svg><use href="#k-pierre"/></svg>Pierre</a><a href="#"><svg><use href="#k-dsm"/></svg>Synology Surveillance ...</a><a href="#"><svg><use href="#k-bbox"/></svg>Bbox - connexion</a><a href="#"><svg><use href="#k-news"/></svg>Google Actualités</a><a href="#"><svg><use href="#k-globe"/></svg>Description | GNUVari...</a><a href="#"><svg><use href="#k-google"/></svg>Google</a><a href="#"><svg><use href="#k-ca"/></svg>Crédit Agricole Alpes ...</a><a href="#"><svg><use href="#k-bourso"/></svg>Boursorama Banque</a><a href="#"><svg><use href="#k-forms"/></svg>Commande groupée ...</a><i class="bar"></i><a href="#"><svg><use href="#k-fb"/></svg>Facebook</a><a href="#"><svg><use href="#f-diy"/></svg>DIY GnuVario : variom...</a><a href="#"><svg><use href="#k-esp"/></svg>Mosfet choice - Page ...</a><button aria-label="More bookmarks"><svg><use href="#n-more"/></svg></button>
  </nav>
  <div class="content">
    <main>
      <figure class="shot first">
        <div class="work">
          <aside class="side"><div class="group">
            <div class="list processes"><table><thead><tr><th>Nom</th><th>Type</th></tr></thead><tbody><tr><td>Process1</td><td>FFF</td></tr><tr><td>Process2</td><td>FFF</td></tr><tr><td>Process3</td><td>FFF</td></tr></tbody></table></div>
            <div class="pair"><button class="btn"><svg class="i18"><use href="#b-add"/></svg>Ajouter</button><button class="btn"><svg class="i18"><use href="#b-del"/></svg>Effacer</button></div>
            <button class="btn"><svg class="i18"><use href="#gears"/></svg>Modifier les paramètres du procédé</button>
            <button class="btn print"><svg class="i18"><use href="#b-print"/></svg>Préparation à l'impression !</button>
          </div></aside>
          <div class="view">
            <svg class="scene" viewBox="3003 168 1362 439">
              <rect x="3003" y="168" width="1362" height="439" fill="url(#skyLow)"/>
              <path d="M3067 168L3109 384" stroke="#aab4bb"/>
              <g data-plate="3109 384 4029 561 4144 -32 3405 -145"></g>
              <path d="M4098 168L4029 561" stroke="#b4bcc0"/>
              <use href="#axes" x="3003" y="168" width="1362" height="439"/>
              <path d="M3573 168L3545 245Q3541 265 3553 273L3690 296Q3706 298 3710 285L3748 168Z" fill="#ffbe00"/>
              <path d="M3543 252Q3620 275 3700 282L3740 168H3748L3710 285Q3706 298 3690 296L3553 273Q3543 268 3543 252Z" fill="#ef9200"/>
              <path d="M3588 203L3599 174M3618 208L3629 180M3648 212L3660 185" stroke="#a86400" stroke-width="2.500"/><path d="M3599 204L3607 174M3628 210L3637 180M3658 214L3667 186" stroke="#d88600" stroke-width="2"/><path d="M3593 204L3603 170M3623 210L3633 176M3653 214L3663 182" stroke="#ffbe00" stroke-width="6"/>
              <g fill="#eb9a00"><circle cx="3603" cy="174" r="11"/><circle cx="3632" cy="178" r="11"/><circle cx="3663" cy="183" r="11"/></g><g fill="#ffbe00"><circle cx="3605" cy="171" r="10"/><circle cx="3634" cy="175" r="10"/><circle cx="3665" cy="180" r="10"/></g>
            </svg>
          </div>
          <div class="tools"></div>
        </div>
      </figure>
      <h1>Generate and optimize the printing of supports material:</h1>
      <p>Open the “Cross-section view” and “Support generation” windows. Put 1mm at “Support pillar resolution”<br>and 40 ° at “Max overhang angle”. Then create the supports by pressing on “Generate automatic supports”</p>
      <figure class="shot second">
        <nav class="menubar"><a href="#">Fichier</a><a href="#">Modifier</a><a href="#">Visualisation</a><a href="#">Maillage</a><a href="#">Réparation</a><a href="#">Outils</a><a href="#">Modules complémentaires</a><a href="#">Compte</a><a href="#">Aide</a></nav>
        <div class="work">
          <aside class="side">
            <fieldset class="group"><legend>Modèles (double cliquer pour modifier)</legend>
              <div class="list models"><label class="model"><input type="checkbox" class="check" checked>GNU top case 154 screen</label></div>
              <div class="pair"><button class="btn"><svg class="i18"><use href="#b-import"/></svg>Importer</button><button class="btn"><svg class="i18"><use href="#b-remove"/></svg>Supprimer</button></div>
              <button class="btn"><svg class="i18"><use href="#b-arrange"/></svg>Centrage et arrangement</button>
            </fieldset>
            <fieldset class="group"><legend>Procédés (double-cliquer pour modifier)</legend>
              <div class="list processes"><table><thead><tr><th>Nom</th><th>Type</th></tr></thead><tbody><tr><td>Process1</td><td>FFF</td></tr><tr><td>Process2</td><td>FFF</td></tr><tr><td>Process3</td><td>FFF</td></tr></tbody></table></div>
              <div class="pair"><button class="btn"><svg class="i18"><use href="#b-add"/></svg>Ajouter</button><button class="btn"><svg class="i18"><use href="#b-del"/></svg>Effacer</button></div>
              <button class="btn"><svg class="i18"><use href="#gears"/></svg>Modifier les paramètres du procédé</button>
              <button class="btn print"><svg class="i18"><use href="#b-print"/></svg>Préparation à l'impression !</button>
            </fieldset>
          </aside>
          <div class="view">
            <svg class="scene" viewBox="3006 942 1360 900">
              <rect x="3006" y="942" width="1360" height="900" fill="url(#sky)"/>
              <path d="M3006 1100L3111 1624M3392 942L3408 1109M3980 942L4137 964" stroke="#aab4bb" fill="none"/>
              <g data-plate="3111 1624 4029 1797 4147 1219 3408 1109"></g>
              <path d="M4140 942L4029 1797M4185 942L4147 1219" stroke="#b4bcc0" stroke-width="1.500" fill="none"/>
              <g transform="matrix(1 0 0 .975 2 1250)"><use href="#axes" x="3003" y="168" width="1362" height="439"/></g>
              <g transform="translate(3420 900) scale(.6441 .625)">
                <path fill-rule="evenodd" fill="#ffbe00" d="M345 582C300 582 272 605 268 640 265 680 272 720 274 745 275 765 262 790 250 815L203 930C199 945 199 965 201 975Q203 988 222 992L430 1025Q450 1028 456 1005L505 850C520 800 590 760 605 715 618 690 617 665 612 650 600 615 530 600 480 593 430 585 390 580 345 582ZM343 697L308 797 461 820 492 718Z"/>
                <path fill="#f39b00" d="M615 660C618 700 590 735 555 770 525 800 515 815 508 840L456 1005Q446 990 452 965L492 850C500 815 515 790 545 765 590 730 612 700 615 660Z"/>
                <path fill="#e08800" d="M200 955Q210 968 235 971L425 1000Q448 1002 452 975L458 1000Q450 1028 430 1025L222 992Q203 988 201 975Z"/>
                <path fill="#ffb400" d="M333 670L515 697 492 718 343 697Z"/><path fill="#ef9500" d="M333 670L343 697 308 797 285 793Z"/><path fill="#ffa900" d="M515 697L492 718 461 820 467 822Z"/>
                <path fill="#b24a00" d="M343 697L492 718 486 745 340 730 322 798 308 797Z"/>
                <path d="M346 713L488 733" stroke="#7a2c00" stroke-width="26" stroke-dasharray="2 4" opacity=".6"/>
                <path fill="#a84800" d="M508 838L498 872 502 868 512 840Z"/>
                <g fill="#e89400"><circle cx="288" cy="836" r="17"/><circle cx="336" cy="843" r="17"/><circle cx="381" cy="851" r="17"/></g>
                <path d="M264 880L277 846M311 888L325 852M359 896L371 862" stroke="#9a5600" stroke-width="4"/>
                <path d="M281 882L292 850M328 890L340 857M375 898L386 864" stroke="#cc8000" stroke-width="4"/>
                <path d="M273 882L289 836M320 890L337 844M367 898L383 852" stroke="#ffbe00" stroke-width="10"/>
                <g fill="#ffbe00"><circle cx="291" cy="830" r="15"/><circle cx="339" cy="838" r="15"/><circle cx="384" cy="846" r="15"/></g>
                <path d="M362 600C420 590 490 605 512 632L500 648C470 620 420 605 378 622L362 606M372 652C365 632 425 630 430 645 455 635 490 648 486 668M372 655C375 668 385 672 400 668M476 662C486 670 482 676 468 676M392 674L450 679" fill="none" stroke="#b87400" stroke-width="3"/>
                <g fill="#a86400"><circle cx="566" cy="645" r="4"/><circle cx="581" cy="648" r="4"/><circle cx="563" cy="655" r="4"/><circle cx="578" cy="658" r="4"/><circle cx="561" cy="664" r="4"/><circle cx="575" cy="667" r="4"/></g>
              </g>
              <text x="3674" y="1318" font-size="18" font-weight="700" font-style="italic" fill="#b87400" transform="rotate(7 3674 1318)">GNU</text>
            </svg>
            <section class="dialog support">
              <h2>Support de génération<button class="close" aria-label="Fermer">x</button></h2>
              <fieldset class="group"><legend>Positionnement automatique</legend>
                <div class="row"><label for="type2">Type de support</label><span class="combo"><select id="type2"><option>Normal</option></select></span></div>
                <div class="row"><label class="wide" for="res2">Résolution du pilier de support</label><span class="spin"><input id="res2" value="1,00"></span>mm</div>
                <div class="row"><label class="wide" for="ang2">Angle de surplomb maximal</label><span class="spin"><input id="ang2" value="40"></span>deg</div>
                <button class="btn hot">Générer des supports automatiques</button>
              </fieldset>
              <fieldset class="group"><legend>Positionnement manuel</legend><button class="btn">Ajouter de nouvelles structures de support</button><button class="btn">Supprimer les supports actuels</button></fieldset>
              <fieldset class="group"><legend>Sauvegarder les structures de support</legend><div class="pair"><button class="btn">Importer des supports</button><button class="btn">Exporter des supports</button></div></fieldset>
              <div class="foot"><button class="btn">Effacer tous les supports</button><button class="btn done">Terminé</button></div>
            </section>
            <section class="dialog section">
              <h2>Vue en section transversale<button class="close" aria-label="Fermer">x</button></h2>
              <div class="checks"><label><input type="checkbox" class="check" checked>Activer la section transversale</label><label><input type="checkbox" class="check">Inverser la vue de section</label></div>
              <fieldset class="group"><legend>Positionnement</legend>
                <div class="axis"><label><input type="radio" name="ax2">Axe X</label><input type="range" value="50" aria-label="X"><span class="spin"><input value="127,50" aria-label="X mm"></span>mm</div>
                <div class="axis"><label><input type="radio" name="ax2">Axe Y</label><input type="range" value="50" aria-label="Y"><span class="spin"><input value="127,50" aria-label="Y mm"></span>mm</div>
                <div class="axis"><label><input type="radio" name="ax2" checked>Axe Z</label><input type="range" value="10" aria-label="Z"><span class="spin"><input value="25,50" aria-label="Z mm"></span>mm</div>
              </fieldset>
            </section>
          </div>
          <div class="tools" role="toolbar">
            <i class="grip"></i>
            <button class="on" aria-label="Select"><svg><use href="#t-arrow"/></svg></button><button aria-label="Move"><svg><use href="#t-move"/></svg></button><button aria-label="Scale"><svg><use href="#t-scale"/></svg></button><button aria-label="Rotate"><svg><use href="#t-rotate"/></svg></button><hr>
            <button aria-label="Default view"><svg class="c-all"><use href="#t-cube"/></svg></button><button aria-label="Top view"><svg class="c-top"><use href="#t-cube"/></svg></button><button aria-label="Front view"><svg class="c-front"><use href="#t-cube"/></svg></button><button aria-label="Side view"><svg class="c-side"><use href="#t-cube"/></svg></button><hr>
            <button class="on" aria-label="Axes"><svg><use href="#t-axes"/></svg></button><button class="on" aria-label="Solid"><svg class="c-none"><use href="#t-cube"/></svg></button><button aria-label="Wireframe"><svg><use href="#t-wire"/></svg></button><button aria-label="Normals"><svg><use href="#t-normal"/></svg></button><hr>
            <button aria-label="Cross section"><svg><use href="#t-cross"/></svg></button><hr>
            <button aria-label="Settings"><svg><use href="#t-gear"/></svg></button><button aria-label="Supports"><svg><use href="#t-support"/></svg></button>
          </div>
        </div>
        <div class="status">Finished generating support structures.</div>
        <svg class="arrows" viewBox="2756 908 1658 967"><path d="M4378 1380L3390 1101M3421 1095L3389 1101 3406 1126M4384 1324L4253 1153M4290 1169L4253 1153 4256 1191" fill="none" stroke="#df1f26" stroke-width="6"/></svg>
      </figure>
      <p>Then put yourself in top view and set the Z axis of the cross section to 7mm. You will be able to remove<br>the supports in the screw holes by pressing “delete the current supports” and by clicking on each stick in<br>the holes.</p>
    </main>
    <div class="scroll"><span>⌃</span><i></i><span class="end">⌄</span></div>
  </div>
  <div class="taskbar">
    <div class="tasks lead"><button aria-label="Démarrer"><svg><use href="#win"/></svg></button><button aria-label="Rechercher"><svg><use href="#search"/></svg></button><button aria-label="Cortana"><svg><use href="#cortana"/></svg></button><button aria-label="Task view"><svg><use href="#taskview"/></svg></button></div>
    <div class="tasks">
      <button aria-label="Edge"><svg><use href="#edge"/></svg></button><button class="run multi" aria-label="Explorer"><svg><use href="#folder"/></svg></button><button class="run" aria-label="Thunderbird"><svg><use href="#tbird"/></svg></button><button class="run" aria-label="Firefox"><svg><use href="#firefox"/></svg></button><button aria-label="PuTTY"><svg><use href="#putty"/></svg></button><button class="run multi" aria-label="Inkscape"><svg><use href="#ink"/></svg></button><button class="run" aria-label="WhatsApp"><svg><use href="#whatsapp"/></svg></button><button class="run active" aria-label="Simplify3D"><svg><use href="#s3d"/></svg></button><button class="run multi" aria-label="SolidWorks"><svg><use href="#sw"/></svg></button><button class="run" aria-label="Editor"><svg><use href="#code"/></svg></button><button class="run" aria-label="VS Code"><svg><use href="#vscode"/></svg></button><button class="run" aria-label="Terminal"><svg><use href="#cmd"/></svg></button><button class="run multi" aria-label="Paint"><svg><use href="#paint"/></svg></button><button class="run" aria-label="Inkscape 2"><svg><use href="#ink"/></svg></button><button class="run" aria-label="Calc"><svg><use href="#calc"/></svg></button><button class="run" aria-label="Notepad++"><svg><use href="#npp"/></svg></button><button class="run" aria-label="Arduino"><svg><use href="#arduino"/></svg></button>
    </div>
    <div class="tray"><time>15:46<br>29/03/2020</time></div>
  </div>
</section>
<script src="plate.js"></script>
</body>
</html>
```

FILE: plate.js
```js
// Draws the printer's build plate: a 255 mm square seen in perspective,
// ruled every 5 mm with a heavier line every 25 mm.
const NS = 'http://www.w3.org/2000/svg';

function projector([x0, y0, x1, y1, x2, y2, x3, y3]) {
  const dx1 = x1 - x2, dy1 = y1 - y2, dx2 = x3 - x2, dy2 = y3 - y2;
  const sx = x0 - x1 + x2 - x3, sy = y0 - y1 + y2 - y3;
  const den = dx1 * dy2 - dx2 * dy1;
  const g = (sx * dy2 - dx2 * sy) / den;
  const h = (dx1 * sy - sx * dy1) / den;
  return (u, v) => {
    const w = g * u + h * v + 1;
    const x = ((x1 - x0 + g * x1) * u + (x3 - x0 + h * x3) * v + x0) / w;
    const y = ((y1 - y0 + g * y1) * u + (y3 - y0 + h * y3) * v + y0) / w;
    return x.toFixed(1) + ' ' + y.toFixed(1);
  };
}

function addPath(parent, d, attrs) {
  const path = document.createElementNS(NS, 'path');
  path.setAttribute('d', d);
  for (const key in attrs) path.setAttribute(key, attrs[key]);
  parent.appendChild(path);
}

document.querySelectorAll('[data-plate]').forEach((group) => {
  const at = projector(group.dataset.plate.split(' ').map(Number));
  const outline = 'M' + [at(0, 0), at(1, 0), at(1, 1), at(0, 1)].join('L') + 'Z';
  let minor = '', major = '';
  for (let i = 0; i <= 50; i++) {
    const t = (2.5 + i * 5) / 255;
    const lines = 'M' + at(t, 0) + 'L' + at(t, 1) + 'M' + at(0, t) + 'L' + at(1, t);
    if (i % 5) minor += lines; else major += lines;
  }
  addPath(group, outline, { fill: '#999' });
  addPath(group, minor, { fill: 'none', stroke: '#8a8a8a', 'stroke-width': 1 });
  addPath(group, major, { fill: 'none', stroke: '#6c6c6c', 'stroke-width': 1.4 });
  addPath(group, outline, { fill: 'none', stroke: '#606060', 'stroke-width': 1.5 });
});
```

FILE: styles.css
```css
* { box-sizing: border-box; }
body { margin: 0; height: 100vh; display: grid; grid-template-columns: 1247fr 2849fr; font-family: "Open Sans", "Noto Sans", sans-serif; background: #000; overflow: hidden; }
button, input, select { font: inherit; color: inherit; }
button { padding: 0; border: 0; background: none; display: flex; align-items: center; justify-content: center; }
a { color: inherit; text-decoration: none; }
svg { display: block; flex: none; }
svg text { font-family: "Liberation Sans", sans-serif; }
.defs { position: absolute; width: 0; height: 0; }
.icons { display: none; }
.grow { flex: 1; }
.i8 { width: 9px; height: 9px; }
.i12 { width: 15px; height: 15px; }
.i18 { width: 18px; height: 18px; }

/* modelling application */
.app { background: #f0f0f0; }
.app, .shot { font-family: "Liberation Sans", sans-serif; font-size: 8px; line-height: 10px; color: #000; white-space: nowrap; }
.titlebar { display: flex; align-items: center; height: 18px; padding-left: 2px; gap: 1px; background: #fff; color: #8c8c8c; font-family: "Open Sans", sans-serif; }
.wc { width: 33px; height: 18px; color: #888; --sw: 2; }
.menubar { display: flex; align-items: center; gap: 12px; height: 14px; padding-left: 6px; background: #fff; color: #8c8c8c; font-family: "Open Sans", sans-serif; }
.work { display: flex; align-items: flex-start; }
.app .work { padding: 1px 0 0 8px; --btn: 22px; --pad: 9px; --models: 253px; --procs: 220px; }
.side { width: 166px; padding-top: 7px; display: flex; flex-direction: column; gap: 13px; }
.group { margin: 0; min-width: 0; border: 1px solid #dcdcdc; padding: var(--pad, 8px) 8px 8px; display: flex; flex-direction: column; gap: 6px; }
.group legend { padding: 0 2px; margin-left: -2px; height: 10px; }
.list { background: #fff; border: 1px solid #828790; }
.models { height: var(--models); }
.processes { height: var(--procs); }
.model { display: flex; align-items: center; gap: 4px; height: 13px; margin-left: 15px; padding-left: 3px; background: #d9d9d9; }
.check { appearance: none; margin: 0; width: 10px; height: 10px; border: 1px solid #333; background: #fff; flex: none; display: grid; place-items: center; }
.check:checked::before { content: ""; width: 3px; height: 6px; border: solid #333; border-width: 0 1px 1px 0; rotate: 40deg; margin-top: -1px; }
.pair { display: grid; grid-template-columns: 1fr 1fr; gap: 6px; }
.btn { height: var(--btn); gap: 2px; background: #e1e1e1; border: 1px solid #adadad; }
.hot { background: #e3f1fb; border-color: #2a7f9e; }
.print { margin-top: 4px; }
table { border-collapse: collapse; width: 100%; }
th, td { padding: 0; text-align: left; font-weight: 400; height: 13px; }
th { height: 18px; padding-left: 3px; }
th:first-child { width: 74px; border-right: 1px solid #e5e5e5; }
td { padding-left: 2px; }
td:first-child { padding-left: 18px; }
.sel { background: linear-gradient(90deg, transparent 15px, #d9d9d9 15px); }
.view { position: relative; flex: 1; margin: 8px 9px 0 12px; border-right: 1px solid #fff; border-bottom: 1px solid #fff; box-shadow: -1px -1px 0 #8d9297; }
.scene { width: 100%; height: auto; }
.tools { width: 26px; padding: 3px 1px 0; border-left: 1px solid #fff; }
.tools button { width: 24px; height: 22px; border: 1px solid transparent; }
.tools .on { background: #c3dcf2; border-color: #93c4ec; }
.tools svg { width: 18px; height: 18px; }
.tools hr { margin: 2px; border: 0; border-top: 1px solid #bbb; }
.grip { display: block; margin: 0 2px 2px; border-top: 2px dotted #bbb; }
.c-all { --top: #7ea9c2; --front: #6c98b3; --side: #5c8199; }
.c-top { --top: #7ea9c2; --front: #b5b5b5; --side: #8f8f8f; }
.c-front { --top: #b5b5b5; --front: #6c98b3; --side: #8f8f8f; }
.c-side { --top: #a5a5a5; --front: #b5b5b5; --side: #6c8ea3; }
.c-none { --top: #a0a0a0; --front: #b0b0b0; --side: #858585; }
.status { display: flex; align-items: end; height: 24px; padding: 0 0 3px 3px; }
.app .status { padding: 0; align-items: center; padding-top: 9px; height: 25px; }
.tip { width: 46px; height: 16px; padding: 2px 5px; background: #fff; border: 1px solid #666; color: #555; box-shadow: 1px 1px 2px #0006; }

/* floating tool windows */
.dialog { position: absolute; background: #f0f0f0; box-shadow: 0 2px 7px #0007; --btn: 15px; }
.dialog h2 { display: flex; align-items: center; justify-content: space-between; margin: 0; height: 23px; padding: 2px 1px 0 6px; background: #fff; font-weight: 400; font-size: 8px; font-family: "Open Sans", sans-serif; }
.close { width: 14px; height: 18px; background: #c75050; color: #fff; font-size: 8px; font-weight: 700; }
.support { left: 9px; top: 11px; width: 284px; padding-bottom: 9px; border-top: 1px solid #456; --gap: 5px; }
.support .group { margin: 0 8px 5px; padding: 8px 7px 7px; gap: 6px; }
.support h2 + .group { margin-top: 7px; padding-top: 7px; gap: var(--gap); }
.row { display: flex; align-items: center; height: 15px; gap: 4px; }
.wide { width: 88px; }
.combo { flex: 1; position: relative; height: 16px; }
.combo select { appearance: none; width: 100%; height: 16px; padding: 0 2px; border: 1px solid #adadad; border-radius: 0; background: #e1e1e1; }
.combo::after { content: ""; position: absolute; right: 4px; top: 6px; border: 3px solid transparent; border-top: 4px solid #000; border-bottom: 0; }
.spin { position: relative; width: 80px; height: 15px; }
.spin input { width: 100%; height: 15px; padding: 0 2px; border: 1px solid #777; background: #fff; display: block; }
.spin::before, .spin::after { position: absolute; right: 2px; width: 11px; height: 6px; border: 1px solid #bbb; background: #eee; font-size: 5px; line-height: 4px; text-align: center; }
.spin::before { content: "▲"; top: 2px; }
.spin::after { content: "▼"; bottom: 2px; }
.foot { display: flex; justify-content: space-between; margin: 6px 8px 0; }
.foot .btn { padding: 0 2px; min-width: 68px; }
.foot .done { min-width: 56px; }
.section { right: 24px; top: 13px; width: 273px; padding-bottom: 9px; --axis: 21px; --spin: 66px; }
.section h2 { height: 22px; color: #999; }
.section .close { background: #e4e4e4; color: #fff; }
.section .group { margin: 0 8px; padding: 4px 0 3px 6px; gap: 0; }
.section .group legend { margin-left: -3px; }
.checks { height: 29px; display: grid; grid-template-columns: 131px 1fr; align-items: center; padding-left: 8px; }
.checks label, .axis label { display: flex; align-items: center; gap: 3px; }
.axis { display: grid; grid-template-columns: 40px 112px var(--spin) 1fr; column-gap: 4px; align-items: center; height: var(--axis); }
.axis .spin { width: 51px; justify-self: end; }
.axis input[type=radio] { appearance: none; margin: 0; width: 10px; height: 10px; border: 1px solid #333; border-radius: 50%; background: #fff; }
.axis input[type=radio]:checked { background: radial-gradient(#222 0 2px, #fff 3px); }
.axis input[type=range] { appearance: none; margin: 0; width: 100%; height: 16px; background: linear-gradient(#d6d6d6, #d6d6d6) center / 100% 3px no-repeat; }
.axis input[type=range]::-webkit-slider-thumb { appearance: none; width: 7px; height: 16px; background: #0078d7; }

/* browser */
.desktop { min-width: 0; }
.browser { display: flex; flex-direction: column; min-width: 0; height: 100vh; background: #ebeff2; color: #111; }
.tabbar { display: flex; height: 43px; background: #20233f; color: #b6b8c6; }
.tabs { flex: 1; display: grid; grid-template-columns: repeat(14, 1fr); min-width: 0; }
.tab { display: flex; align-items: center; gap: 8px; min-width: 0; padding: 3px 13px 0 12px; border-right: 1px solid #55586e; font-size: 15px; white-space: nowrap; }
.tab > svg { width: 20px; height: 20px; }
.tab span { flex: 1; overflow: hidden; mask-image: linear-gradient(90deg, #000 calc(100% - 35px), transparent); }
.tab button svg { width: 14px; height: 14px; }
.tab .mute { width: 18px; }
.current { background: #f9f9fb; color: #555; border-top: 3px solid #0a84ff; padding-top: 0; }
.winctl { flex: 0 0 249px; display: grid; grid-template-columns: 60px 63px 1fr 60px; align-items: center; --sw: 1.5; }
.winctl svg { width: 14px; height: 14px; }
.winctl .new svg { width: 18px; height: 18px; }
.navbar, .bookmarks { background: #f9f9fb; color: #4a4a4f; }
.navbar { display: flex; align-items: center; height: 52px; padding-left: 4px; }
.navbar > button { width: 42px; height: 44px; }
.navbar button svg { width: 21px; height: 21px; }
.navbar .back { width: 44px; border: 1px solid #bbb; border-radius: 50%; background: #fff; }
.fwd svg { rotate: 180deg; color: #bbb; }
.url { flex: 1; display: flex; align-items: center; margin: 0 0 0 154px; height: 40px; padding: 0 8px; gap: 8px; background: #fff; border: 1px solid #bbb; border-radius: 3px; box-shadow: 0 1px 4px #0002; font-size: 15px; color: #777; }
.url svg { width: 20px; height: 20px; margin-left: 1px; }
.url svg:nth-last-of-type(-n+3) { margin-left: 8px; }
.addr { flex: 1; padding-left: 2px; }
.addr b { font-weight: 400; color: #0c0c0d; }
.bar { width: 1px; height: 28px; background: #ccc; }
.right { flex: none; display: flex; align-items: center; padding-left: 155px; }
.right button { width: 42px; }
.right .bar { height: 46px; margin-left: 3px; }
.right .menu { width: 53px; }
.bookmarks { display: grid; grid-template-columns: 141px 210px 209px 82px 211px 163px 162px 212px 90px 211px 181px 205px 13px 108px 210px 1fr 33px; align-items: center; height: 31px; padding: 0 0 2px 17px; border-bottom: 1px solid #ddd; font-size: 15px; color: #0c0c0d; white-space: nowrap; }
.bookmarks a { display: flex; align-items: center; gap: 8px; }
.bookmarks svg { width: 20px; height: 20px; }
.bookmarks .bar { height: 21px; background: #999; }
.bookmarks button { justify-content: start; color: #4a4a4f; }
.content { flex: 1; min-height: 0; overflow: hidden; display: flex; border-bottom: 2px solid #fff; }
main { flex: 0 1 1230px; margin: 0 auto; min-width: 0; }
h1 { margin: 30px 0 26px; font-size: 37px; line-height: 44px; white-space: nowrap; }
p { margin: 0; font-size: 25px; line-height: 39px; white-space: nowrap; }
.scroll { flex: none; width: 22px; background: #f0f0f0; border-left: 1px solid #ddd; display: flex; flex-direction: column; align-items: center; font-size: 12px; color: #555; }
.scroll i { width: 20px; height: 120px; margin-top: 140px; background: #cdcdcd; }
.scroll .end { margin-top: auto; }

/* screenshots shown on the page */
.shot { position: relative; margin: 0; background: #f0f0f0; overflow: hidden; }
.first { border-radius: 0 0 0 20px; border-right: 2px solid #555; padding-bottom: 25px; }
.first .work { padding-left: 4px; --btn: 22px; --procs: 222px; }
.first .side { width: 168px; padding: 0; }
.first .group { border-top: 0; padding-top: 7px; }
.first .view { margin: 0 9px 0 11px; }
.first .tools { align-self: stretch; }
.second { margin: 20px 0 21px; border-radius: 20px; }
.second .menubar { height: 17px; padding: 3px 0 0 5px; }
.second .work { padding: 0 0 0 7px; --btn: 21px; --pad: 8px; --models: 248px; --procs: 215px; }
.second .side { width: 167px; padding-top: 8px; }
.second .view { margin: 8px 8px 0 11px; }
.second .tools { width: 27px; padding-top: 4px; }
.second .tools hr { margin: 2px 2px 1px; }
.second .grip { margin-bottom: 1px; }
.second .dialog { --btn: 15px; }
.second .support { left: 6px; width: 280px; --gap: 5px; padding-bottom: 9px; }
.second .support h2 { height: 22px; }
.second .wide { width: 106px; }
.second .row .spin { width: 67px; }
.second .section { right: 82px; top: 20px; width: 269px; padding-bottom: 8px; --axis: 20px; --spin: 62px; }
.arrows { position: absolute; inset: 0; width: 100%; height: 100%; }

/* taskbars */
.taskbar { flex: none; display: flex; height: 52px; background: linear-gradient(90deg, #233a42, #1f3345 60%, #1b2748); color: #fff; }
.tasks { display: grid; grid-auto-flow: column; grid-auto-columns: 1fr; flex: 0 0 1098px; }
.tasks button { position: relative; }
.tasks svg { width: 30px; height: 30px; }
.lead { flex-basis: 251px; }
.lead svg { width: 23px; height: 23px; }
.run::after { content: ""; position: absolute; left: 10%; right: 10%; bottom: 0; height: 3px; background: #76b9ed; }
.multi::after { background: linear-gradient(90deg, #76b9ed 78%, #4d7ea6 78%); }
.active { background: #ffffff33; }
.active::after { left: 0; right: 0; }
.tray { margin-left: auto; display: flex; align-items: center; padding-right: 6px; }
.tray time { text-align: center; font-size: 14px; line-height: 22px; }
.small { height: 30px; background: linear-gradient(90deg, #223a42, #1f3040 60%, #1a2547); }
.start { width: 36px; background: #37505b; color: #3f9be4; }
.start svg { width: 17px; height: 17px; }
.find { display: flex; align-items: center; gap: 6px; width: 254px; padding-left: 7px; background: #f2f2f2; color: #222; font-size: 10px; }
.find svg { width: 17px; height: 17px; }
.find input { flex: 1; border: 0; background: none; padding: 0; }
.find input::placeholder { color: #555; }
.small .tasks { flex-basis: 692px; }
.small .tasks svg { width: 18px; height: 18px; }
.small .tasks button:nth-child(-n+2) svg { width: 14px; height: 14px; }
.small .run::after { height: 2px; }
.small .tray { gap: 4px; padding-right: 16px; }
.small .tray svg { width: 14px; height: 14px; }
.small .tray time { font-size: 8px; line-height: 13px; margin: 0 4px; }
.small .tray .bell { margin-left: 12px; }
```
